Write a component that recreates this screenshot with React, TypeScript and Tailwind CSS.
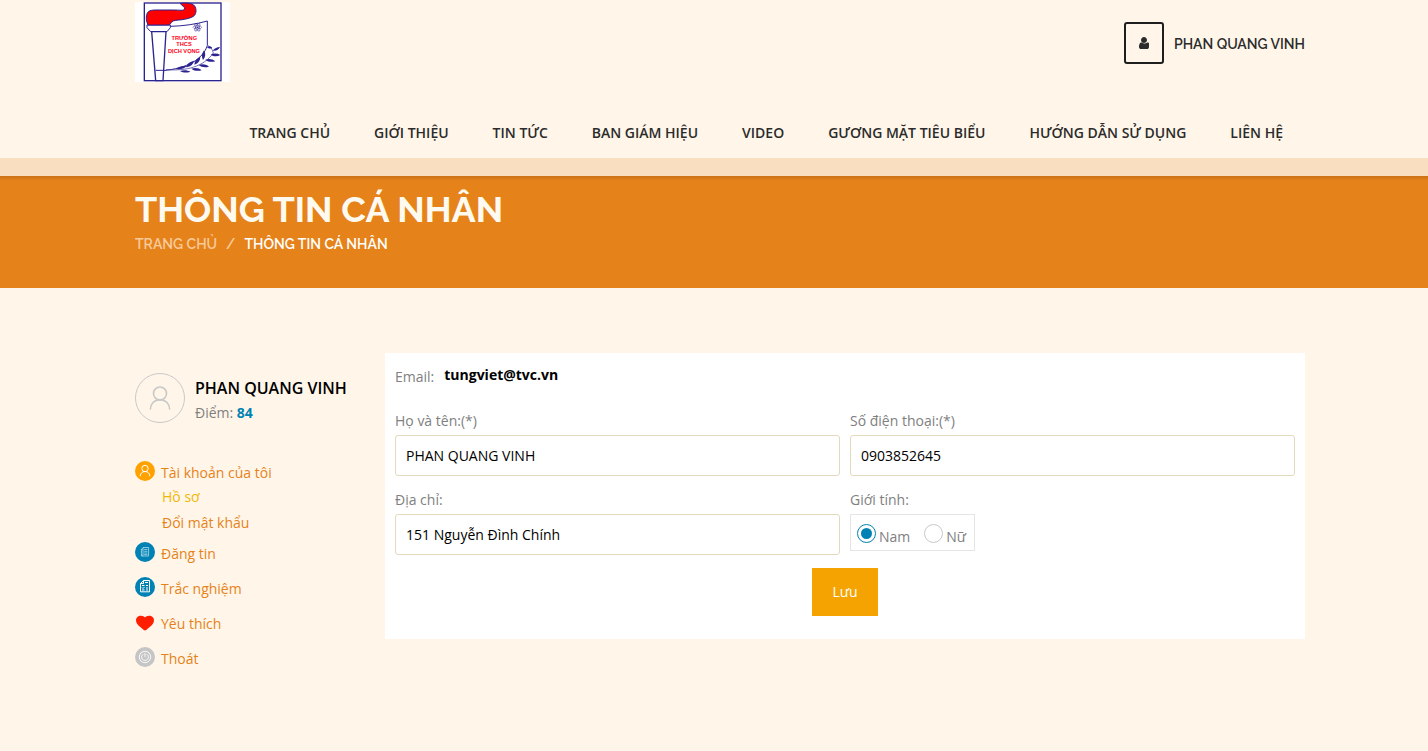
import React, { useState } from 'react';

const menu = [
  'Trang chủ',
  'Giới thiệu',
  'Tin tức',
  'Ban giám hiệu',
  'Video',
  'Gương mặt tiêu biểu',
  'Hướng dẫn sử dụng',
  'Liên hệ',
];

const App: React.FC = () => {
  const [gender, setGender] = useState<string>('nam');

  return (
    <div className="min-h-screen bg-[#fff6e9] font-['Open_Sans','Noto_Sans',sans-serif] text-sm text-[#808080]">
      {/* Header */}
      <header className="border-b-[18px] border-[#f9dec0]">
        <div className="mx-auto max-w-[1182px] pt-[2px] pb-[13px] pl-3">
          <div className="flex items-start justify-between">
            <a href="#" aria-label="Trường THCS Dịch Vọng">
              <SchoolLogo />
            </a>
            <div className="flex items-center gap-[10px] pt-5 font-['Raleway','Lato','Open_Sans',sans-serif] font-semibold text-[#2b2b2b]">
              <button
                type="button"
                aria-label="Tài khoản"
                className="flex h-[42px] w-10 items-center justify-center rounded-[3px] border-2 border-[#1e1e1e]"
              >
                <UserSolid />
              </button>
              <a href="#" className="pt-[2px] leading-6 uppercase">Phan Quang Vinh</a>
            </div>
          </div>

          <nav className="mt-[39px] flex flex-wrap justify-end">
            {menu.map((item) => (
              <a key={item} href="#" className="px-[22px] leading-6 font-semibold text-[#2b2b2b] uppercase">
                {item}
              </a>
            ))}
          </nav>
        </div>
      </header>

      {/* Page title */}
      <section className="bg-[#e6821a] font-['Raleway','Lato','Open_Sans',sans-serif]">
        <div className="h-[5px] bg-linear-to-b from-black/12 to-transparent"></div>
        <div className="mx-auto max-w-[1182px] pt-2 pb-8 pl-3">
          <h1 className="text-4xl leading-10 font-bold text-[#fffaf0] uppercase">Thông tin cá nhân</h1>
          <div className="mt-[3px] flex gap-2 leading-6 font-semibold uppercase">
            <a href="#" className="text-[#f8ca9a]">Trang chủ</a>
            <span className="px-px text-[#f8ca9a]">/</span>
            <span className="text-white">Thông tin cá nhân</span>
          </div>
        </div>
      </section>

      <main className="mx-auto flex max-w-[1182px] items-start pt-[65px] pb-20 pl-3">
        {/* Sidebar */}
        <aside className="w-[250px] shrink-0 pt-5">
          <div className="flex gap-[10px]">
            <svg width="50" height="50" viewBox="0 0 50 50" fill="none" stroke="#c8c8c8">
              <circle cx="25" cy="25" r="24.5" />
              <circle cx="25" cy="20.5" r="6.5" strokeWidth="1.6" />
              <path d="M15.3 36.5c0-5.5 4-9.8 9.7-9.8s9.7 4.3 9.7 9.8" strokeWidth="1.6" />
            </svg>
            <div className="pt-[3px]">
              <p className="text-base leading-6 font-semibold text-black uppercase">Phan Quang Vinh</p>
              <p className="leading-[26px]">
                Điểm: <b className="text-[#0082b4]">84</b>
              </p>
            </div>
          </div>

          <ul className="mt-[35px] flex flex-col gap-[11px] leading-6 text-[#e6821a]">
            <li className="-mb-1">
              <SideLink icon={<AccountIcon />} label="Tài khoản của tôi" />
              <ul className="flex flex-col gap-[2px] pl-[27px]">
                <li><a href="#" className="text-[#f2b705]">Hồ sơ</a></li>
                <li><a href="#">Đổi mật khẩu</a></li>
              </ul>
            </li>
            <li><SideLink icon={<PostIcon />} label="Đăng tin" /></li>
            <li><SideLink icon={<QuizIcon />} label="Trắc nghiệm" /></li>
            <li><SideLink icon={<HeartIcon />} label="Yêu thích" /></li>
            <li><SideLink icon={<PowerIcon />} label="Thoát" /></li>
          </ul>
        </aside>

        {/* Profile form */}
        <form className="flex-1 bg-white px-[10px] pt-[10px] pb-[23px]" onSubmit={(e) => e.preventDefault()}>
          <div className="mb-[18px] flex items-start gap-[10px]">
            <span className="leading-7">Email:</span>
            <b className="leading-6 text-black">tungviet@tvc.vn</b>
          </div>

          <div className="grid grid-cols-2 gap-x-[10px] gap-y-3">
            <Field id="name" label="Họ và tên:(*)" value="PHAN QUANG VINH" />
            <Field id="phone" label="Số điện thoại:(*)" value="0903852645" />
            <Field id="address" label="Địa chỉ:" value="151 Nguyễn Đình Chính" />
            <fieldset>
              <legend className="mb-[2px] leading-6">Giới tính:</legend>
              <div className="flex w-fit gap-[14px] border border-[#e5e5e5] pt-[9px] pr-2 pl-[6px]">
                <Radio label="Nam" checked={gender === 'nam'} onChange={() => setGender('nam')} />
                <Radio label="Nữ" checked={gender === 'nu'} onChange={() => setGender('nu')} />
              </div>
            </fieldset>
          </div>

          <div className="mt-[13px] flex justify-center">
            <button type="submit" className="h-12 w-[66px] bg-[#f4a300] font-medium text-white">Lưu</button>
          </div>
        </form>
      </main>
    </div>
  );
};

const SideLink = ({ icon, label }: { icon: React.ReactNode; label: string }) => (
  <a href="#" className="flex items-start gap-[6px]">
    {icon}
    <span>{label}</span>
  </a>
);

const Field = ({ id, label, value }: { id: string; label: string; value: string }) => (
  <div>
    <label htmlFor={id} className="mb-[2px] block leading-6">{label}</label>
    <input
      id={id}
      type="text"
      defaultValue={value}
      className="block h-[41px] w-full rounded-[3px] border border-[#e3d9bd] bg-white px-[10px] text-black outline-none"
    />
  </div>
);

const Radio = ({ label, checked, onChange }: { label: string; checked: boolean; onChange: () => void }) => (
  <label className="flex items-start gap-[3px] leading-[26px]">
    <input
      type="radio"
      name="gender"
      checked={checked}
      onChange={onChange}
      className="size-[19px] appearance-none rounded-full border border-[#c8c8c8] bg-clip-content p-[3px] checked:border-[#0082b4] checked:bg-[#0082b4]"
    />
    {label}
  </label>
);

const UserSolid = () => (
  <svg width="10" height="14" viewBox="0 0 1280 1792" fill="currentColor">
    <path d="M1280 1399q0 120-73 189.500t-194 69.500h-746q-121 0-194-69.500t-73-189.500q0-53 3.500-103.500t14-109 26.500-108.500 43-97.500 62-81 85.500-53.500 111.500-20q9 0 42 21.500t74.500 48 108 48 133.500 21.500 133.500-21.500 108-48 74.500-48 42-21.500q61 0 111.500 20t85.500 53.500 62 81 43 97.500 26.500 108.500 14 109 3.500 103.500zm-256-887q0 159-112.500 271.500t-271.500 112.500-271.500-112.500-112.500-271.500 112.500-271.500 271.500-112.500 271.500 112.500 112.500 271.500z" />
  </svg>
);

const AccountIcon = () => (
  <svg width="20" height="20" viewBox="0 0 20 20" fill="none" stroke="white">
    <circle cx="10" cy="10" r="10" fill="#ffa200" stroke="none" />
    <circle cx="10" cy="7.5" r="3.2" />
    <path d="M5.200 15.200c0-2.700 2-4.700 4.800-4.700s4.800 2 4.800 4.700" />
  </svg>
);

const PostIcon = () => (
  <svg width="20" height="20" viewBox="0 0 20 20" fill="none" stroke="#b5dcea" strokeWidth=".8">
    <circle cx="10" cy="10" r="10" fill="#0082b4" stroke="none" />
    <path d="M8 5.500h5.600v8.500H6.400V7H8M8 5.500V13c0 .7-.5 1-.9 1M9.200 7.500h3.200M9.200 9.300h3.200M9.200 11h3.200M9.200 12.600h3.200" />
  </svg>
);

const QuizIcon = () => (
  <svg width="20" height="20" viewBox="0 0 20 20" fill="none" stroke="white">
    <circle cx="10" cy="10" r="10" fill="#0082b4" stroke="none" />
    <path d="M8.500 3.500h6v11.300h-9V6.500zM8.500 3.500v3h-3M10 5.500h3M7 8.500h2.500M7 10.500l1 1 1.500-1.500M7 13h2.500M11 8.500h2M11 11h2M11 13h2" />
  </svg>
);

const HeartIcon = () => (
  <svg width="20" height="20" viewBox="0 0 20 20" fill="#ff1e00">
    <path d="M10 5.600C9.100 4.400 7.700 3.700 6 3.700 3.100 3.700 1 5.700 1 8.300c0 2.900 1.900 4.900 4.600 7L8.800 18c.8.600 1.600.6 2.400 0l3.200-2.700c2.700-2.100 4.600-4.100 4.600-7 0-2.600-2.100-4.600-5-4.600-1.700 0-3.100.7-4 1.900z" />
  </svg>
);

const PowerIcon = () => (
  <svg width="20" height="20" viewBox="0 0 20 20" fill="none" stroke="white">
    <circle cx="10" cy="10" r="10" fill="#c5c5c5" stroke="none" />
    <circle cx="10" cy="10" r="5.7" strokeWidth=".9" />
    <path d="M8 7.300a3.400 3.400 0 1 0 4 0M10 6v4" strokeWidth=".9" />
  </svg>
);

const SchoolLogo = () => (
  <svg width="95" height="80" viewBox="15 6 285 240" fill="none" stroke="#2b2390" strokeWidth="3">
    <rect x="15" y="6" width="285" height="240" fill="white" stroke="none" />
    <rect x="43" y="9" width="230" height="233" strokeWidth="4" />
    {/* shield */}
    <path d="M121 79c38-1 76-6 111-16v74c-14 40-58 68-134 75" />
    {/* torch */}
    <path d="M51 75h70v8l-10 12H62L51 83z" fill="white" />
    <path d="M65 95l12 147h22l9-147z" fill="white" strokeWidth="4" />
    <path d="M77 211h22" />
    <path
      d="M54 75c-6-13-7-26-2-36 3-6 10-9 25-9h54c18 0 30 3 33-3 1-6-9-11-14-17 17-2 33-1 41 5 8 7 9 20 4 29-6 9-22 12-38 15-15 2-27 1-32 7-4 4-3 7-8 9z"
      fill="#ff0000"
    />
    {/* atom */}
    <g strokeWidth="1.5">
      <ellipse cx="202" cy="82" rx="13" ry="5" />
      <ellipse cx="202" cy="82" rx="13" ry="5" transform="rotate(60 202 82)" />
      <ellipse cx="202" cy="82" rx="13" ry="5" transform="rotate(120 202 82)" />
      <circle cx="202" cy="82" r="2" fill="#2b2390" />
    </g>
    {/* laurel branch */}
    <path d="M108 209c62 4 112-8 142-50M250 159c-3-12-8-18-16-22" strokeWidth="2" />
    <g fill="#2b2390" stroke="none">
      <path d="M138 207c8-8 18-10 32-9-8 8-18 11-32 9zM168 202c4-12 12-17 24-20-2 11-10 18-24 20zM193 194c1-12 7-19 18-24 0 12-6 20-18 24zM219 180c-5-10-4-19 3-29 6 11 5 20-3 29z" />
      <path d="M150 213c11-4 22-3 31 2-11 4-21 4-31-2zM184 206c12-4 23-2 31 5-12 3-22 2-31-5zM206 195c11-4 22-2 31 5-12 3-22 2-31-5zM226 179c11-4 21-2 30 5-12 3-22 2-30-5zM242 164c10-5 20-4 29 1-10 6-20 5-29-1zM248 152c6-7 13-11 22-11-4 8-11 13-22 11zM231 141c6-4 12-3 16 3-6 3-12 2-16-3z" />
    </g>
    <g
      fill="#ff0018"
      stroke="none"
      textAnchor="middle"
      className="font-['Liberation_Sans',sans-serif] text-[17px] font-bold"
    >
      <text x="163" y="119">TRƯỜNG</text>
      <text x="162" y="138">THCS</text>
      <text x="162" y="158">DỊCH VỌNG</text>
    </g>
  </svg>
);

export default App;
